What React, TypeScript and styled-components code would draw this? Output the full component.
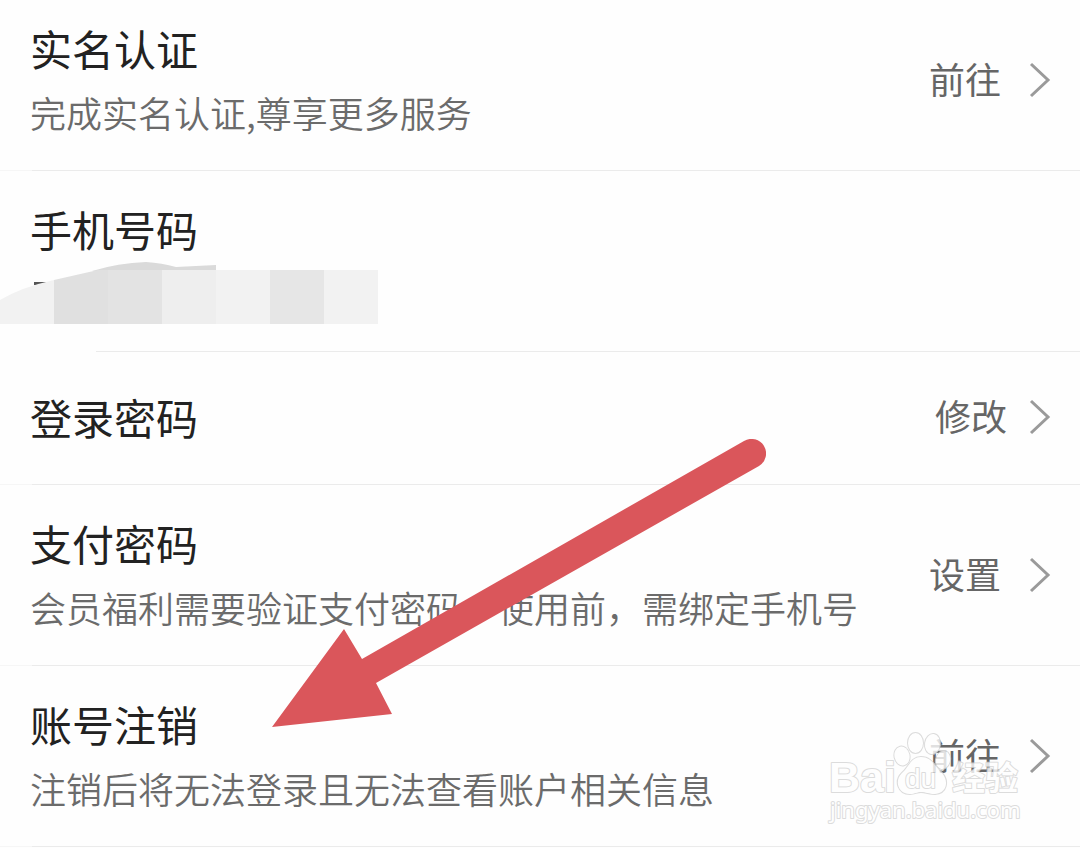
import React from "react";
import styled, { createGlobalStyle } from "styled-components";

const GlobalStyle = createGlobalStyle`
  * { box-sizing: border-box; }
  body {
    margin: 0;
    background: #fefefe;
    font-family: "Noto Sans CJK SC", "Noto Sans", sans-serif;
  }
`;

const Page = styled.main`
  position: relative;
  overflow: hidden;
`;

const List = styled.ul`
  margin: 0;
  padding: 0;
  list-style: none;
`;

const Row = styled.li<{ $first?: boolean; $single?: boolean }>`
  position: relative;
  display: flex;
  align-items: center;
  justify-content: space-between;
  padding: ${(p) =>
    p.$single ? "33px 28px 36px 30px" : p.$first ? "16px 28px 27px 30px" : "26px 28px 27px 30px"};
  background: linear-gradient(to right, #f6f6f6 32px, #ebebeb 32px) bottom / 100% 1px no-repeat;
`;

const Info = styled.div<{ $tall?: boolean }>`
  min-height: ${(p) => (p.$tall ? "128px" : "64px")};
`;

const Title = styled.h2`
  margin: 0;
  font-size: 42px;
  font-weight: 400;
  line-height: 64px;
  color: #222;
`;

const Detail = styled.p`
  margin: 0;
  font-size: 36px;
  font-weight: 350;
  line-height: 64px;
  color: #6b6b6b;
  white-space: nowrap;
`;

const Action = styled.button<{ $close?: boolean }>`
  display: flex;
  align-items: center;
  gap: ${(p) => (p.$close ? "21px" : "27px")};
  padding: 0;
  border: 0;
  background: none;
  font-family: inherit;
  font-size: 36px;
  line-height: 48px;
  color: #666;
  cursor: pointer;
`;

const ActionLabel = styled.span`
  padding-bottom: 4px;
`;

const Chevron = styled.svg`
  display: block;
  width: 24px;
  height: 36px;
  fill: none;
  stroke: #9a9a9a;
  stroke-width: 3;
`;

const Mosaic = styled.svg`
  position: absolute;
  left: 0;
  bottom: 0;
  width: 400px;
  height: 92px;
`;

const Arrow = styled.svg`
  position: absolute;
  left: 272px;
  top: 439px;
  width: 494px;
  height: 290px;
  fill: #da565b;
  pointer-events: none;
`;

const Watermark = styled.svg`
  position: absolute;
  right: 54px;
  bottom: 20px;
  width: 200px;
  height: 98px;
  pointer-events: none;
  fill: #fff;
  stroke: #d4d4d4;
  stroke-width: 2;
  stroke-linejoin: round;
  paint-order: stroke;
  opacity: 0.8;
`;

type Item = {
  title: string;
  detail?: string;
  action?: string;
  masked?: boolean;
};

const items: Item[] = [
  { title: "实名认证", detail: "完成实名认证,尊享更多服务", action: "前往" },
  { title: "手机号码", masked: true },
  { title: "登录密码", action: "修改" },
  { title: "支付密码", detail: "会员福利需要验证支付密码，使用前，需绑定手机号", action: "设置" },
  { title: "账号注销", detail: "注销后将无法登录且无法查看账户相关信息", action: "前往" },
];

function MaskedNumber() {
  return (
    <Mosaic viewBox="0 260 400 92" aria-hidden="true">
      <rect x="0" y="324" width="96" height="28" fill="#fefefe" />
      <path d="M34 282H48L42 285H34Z" fill="#555" />
      <path d="M92 271Q118 263 146 262Q162 263 176 267L216 265V271Z" fill="#dadada" />
      <path d="M0 300Q22 287 54 280V324H0Z" fill="#f2f2f2" />
      <path d="M54 280L98 270H108V324H54Z" fill="#e0e0e0" />
      <rect x="108" y="270" width="54" height="54" fill="#e3e3e3" />
      <rect x="162" y="270" width="54" height="54" fill="#eee" />
      <rect x="216" y="270" width="54" height="54" fill="#f2f2f2" />
      <rect x="270" y="270" width="54" height="54" fill="#e6e6e6" />
      <rect x="324" y="270" width="54" height="54" fill="#f2f2f2" />
    </Mosaic>
  );
}

export default function App() {
  return (
    <Page>
      <GlobalStyle />
      <List>
        {items.map((item, index) => (
          <Row key={item.title} $first={index === 0} $single={!item.detail && !item.masked}>
            <Info $tall={item.masked}>
              <Title>{item.title}</Title>
              {item.detail && <Detail>{item.detail}</Detail>}
            </Info>
            {item.masked && <MaskedNumber />}
            {item.action && (
              <Action type="button" $close={item.action === "修改"}>
                <ActionLabel>{item.action}</ActionLabel>
                <Chevron viewBox="0 0 24 36" aria-hidden="true">
                  <path d="M3 2L20 18L3 34" />
                </Chevron>
              </Action>
            )}
          </Row>
        ))}
      </List>
      <Arrow viewBox="272 439 494 290" aria-hidden="true">
        <path d="M272 727L344 629L362 659L744 441A14 14 0 0 1 759 466L376 683L392 714Z" />
      </Arrow>
      <Watermark viewBox="826 729 200 98" aria-hidden="true">
        <ellipse cx="902" cy="756" rx="7.5" ry="9.5" transform="rotate(-12 902 756)" />
        <ellipse cx="915.5" cy="743" rx="7.5" ry="10" />
        <ellipse cx="932.5" cy="744" rx="7.5" ry="10" transform="rotate(8 932.5 744)" />
        <ellipse cx="943" cy="760" rx="7" ry="9" transform="rotate(15 943 760)" />
        <path d="M921 757C911 757 909 767 902 773C894 781 898 794 910 794C915 794 917 792 921 792C926 792 929 794 935 794C947 793 949 781 942 773C935 767 932 757 921 757Z" />
        <text x="829" y="792" fontFamily="Liberation Sans" fontWeight="700" fontSize="43">Bai</text>
        <text x="905" y="788" fontFamily="Liberation Sans" fontSize="28">du</text>
        <text x="952" y="790" fontFamily="Noto Sans CJK SC" fontWeight="700" fontSize="33">经验</text>
        <text x="830" y="818" fontFamily="Noto Sans" fontWeight="400" fontSize="22">jingyan.baidu.com</text>
      </Watermark>
    </Page>
  );
}
